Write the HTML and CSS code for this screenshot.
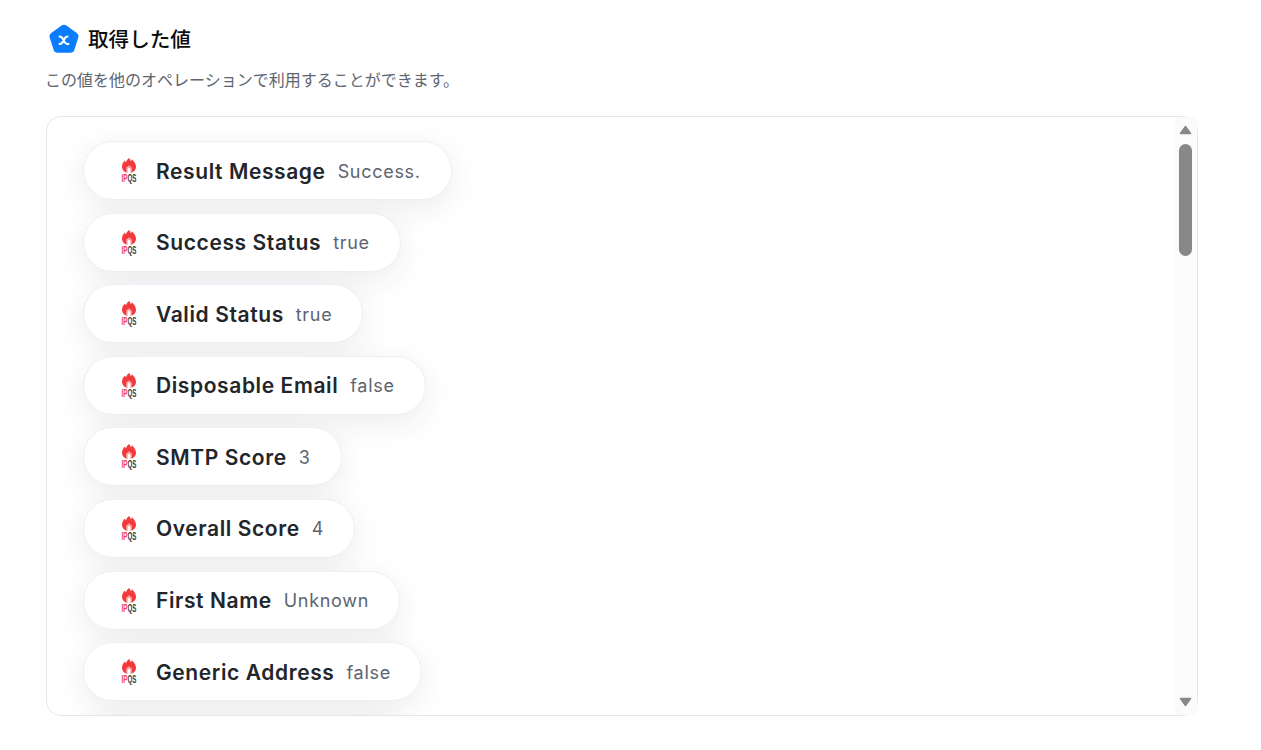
FILE: index.html
```html
<!DOCTYPE html>
<html lang="ja">

<head>
    <meta charset="UTF-8">
    <title>取得した値</title>
    <link rel="stylesheet" href="styles.css">
</head>

<body>
    <svg class="defs" width="0" height="0">
        <symbol id="flame" viewBox="0 0 14 15">
            <path d="M7 0c.9 1 1.500 2 1.700 3.300.6-.5 1-1.200 1.100-2.100C12.300 3.300 14 5.800 14 8.700 14 12.300 11 15 7 15s-7-2.700-7-6.300c0-2.600 1.200-4.600 3-6.300.1.800.4 1.500 1 2C4.300 2.800 5.600 1.200 7 0z" fill="#f4393c"/>
            <path d="M7 7.200 9.800 9.400V15H4.200V9.400z" fill="#f7a3a3"/>
            <path d="M5.600 15v-3.600a1.400 1.400 0 0 1 2.800 0V15z" fill="#fff"/>
        </symbol>
    </svg>
    <div class="page">
        <div class="title">
            <svg class="titleIcon" viewBox="0 0 32 32" width="32" height="32">
                <path d="M13.6 1.6a4 4 0 0 1 4.800 0l10.400 7.500a4 4 0 0 1 1.500 4.500l-4 12.300a4 4 0 0 1-3.800 2.800H9.500a4 4 0 0 1-3.800-2.800l-4-12.300a4 4 0 0 1 1.500-4.500z" fill="#0a7cff"/>
                <path d="M11.500 12.500c2 0 3 1 4.200 3.800s2.300 3.800 4.800 3.800M19.500 12.500c-1.500 0-2.600 1-3.800 3.800s-2.200 3.800-4.200 3.800" fill="none" stroke="#fff" stroke-width="2" stroke-linecap="round"/>
            </svg>
            <h2>取得した値</h2>
        </div>
        <p class="desc">この値を他のオペレーションで利用することができます。</p>

        <div class="box">
            <ul class="pills">
                <li class="pill"><span class="logo"><svg class="flame"><use href="#flame"/></svg><span class="logoText"><b>IP</b>QS</span></span><span class="name">Result Message</span><span class="val">Success.</span></li>
                <li class="pill"><span class="logo"><svg class="flame"><use href="#flame"/></svg><span class="logoText"><b>IP</b>QS</span></span><span class="name">Success Status</span><span class="val">true</span></li>
                <li class="pill"><span class="logo"><svg class="flame"><use href="#flame"/></svg><span class="logoText"><b>IP</b>QS</span></span><span class="name">Valid Status</span><span class="val">true</span></li>
                <li class="pill"><span class="logo"><svg class="flame"><use href="#flame"/></svg><span class="logoText"><b>IP</b>QS</span></span><span class="name">Disposable Email</span><span class="val">false</span></li>
                <li class="pill"><span class="logo"><svg class="flame"><use href="#flame"/></svg><span class="logoText"><b>IP</b>QS</span></span><span class="name">SMTP Score</span><span class="val">3</span></li>
                <li class="pill"><span class="logo"><svg class="flame"><use href="#flame"/></svg><span class="logoText"><b>IP</b>QS</span></span><span class="name">Overall Score</span><span class="val">4</span></li>
                <li class="pill"><span class="logo"><svg class="flame"><use href="#flame"/></svg><span class="logoText"><b>IP</b>QS</span></span><span class="name">First Name</span><span class="val">Unknown</span></li>
                <li class="pill"><span class="logo"><svg class="flame"><use href="#flame"/></svg><span class="logoText"><b>IP</b>QS</span></span><span class="name">Generic Address</span><span class="val">false</span></li>
                <li class="pill pillEmpty"></li>
            </ul>
            <div class="bar">
                <svg class="arrowUp" viewBox="0 0 13 10" width="13" height="10"><path d="M6.500 1.500 11.500 8.500H1.500z" fill="#888" stroke="#888" stroke-width="1.500" stroke-linejoin="round"/></svg>
                <span class="thumb"></span>
                <svg class="arrowDown" viewBox="0 0 13 10" width="13" height="10"><path d="M6.500 8.500 11.500 1.500H1.500z" fill="#888" stroke="#888" stroke-width="1.500" stroke-linejoin="round"/></svg>
            </div>
        </div>
    </div>
</body>

</html>
```

FILE: styles.css
```css
html,body,h2,p,ul,li{margin:0;padding:0;}
li{list-style:none;}
body{background:#fff;font-family:Inter,"Noto Sans CJK JP",sans-serif;color:#22252a;}
.defs{position:absolute;}
.page{width:1152px;padding:23px 0 0 46px;}
.title{display:flex;align-items:center;height:32px;padding-left:2px;}
.titleIcon{width:32px;height:32px;flex:none;margin-top:1px;}
.title h2{margin-left:8px;margin-top:-3px;font-size:20.6px;font-weight:500;line-height:32px;color:#0c0c0c;font-family:"Noto Sans CJK JP",sans-serif;}
.desc{margin-top:13px;margin-left:-1px;font-size:16px;line-height:22px;color:#5c6470;font-family:"Noto Sans CJK JP",sans-serif;}
.box{position:relative;height:598px;margin-top:26px;border:1px solid #e4e6ea;border-radius:15px;}
.pills{display:flex;flex-direction:column;align-items:flex-start;gap:12.6px;height:100%;box-sizing:border-box;padding:24px 0 0 36px;border-radius:14px;overflow:hidden;}
.pill{display:flex;align-items:center;flex:none;box-sizing:border-box;height:59px;padding:1px 30px 0 36px;background:#fff;border:1px solid #eeeff4;border-radius:29.5px;box-shadow:0 8px 30px rgba(30,40,60,.09);}
.pillEmpty{width:320px;}
.logo{display:flex;flex-direction:column;align-items:center;width:18px;flex:none;margin-right:18px;margin-bottom:1px;}
.flame{width:14px;height:15px;}
.logoText{display:block;font-size:10px;line-height:8px;font-family:"Liberation Sans",sans-serif;font-weight:700;color:#3a3d45;transform:scaleX(.62);margin-top:2px;white-space:nowrap;}
.logoText b{color:#f4393c;}
.name{font-size:21px;font-weight:600;letter-spacing:.6px;white-space:nowrap;}
.val{margin-left:12px;font-size:18px;letter-spacing:.7px;color:#5c6470;white-space:nowrap;}
.bar{position:absolute;top:0;right:0;bottom:0;width:23px;background:#fbfbfb;}
.arrowUp,.arrowDown{position:absolute;left:5px;width:13px;height:10px;}
.arrowUp{top:8px;}
.arrowDown{bottom:8px;}
.thumb{position:absolute;top:27px;left:5px;width:13px;height:112px;border-radius:7px;background:#888;}
```
